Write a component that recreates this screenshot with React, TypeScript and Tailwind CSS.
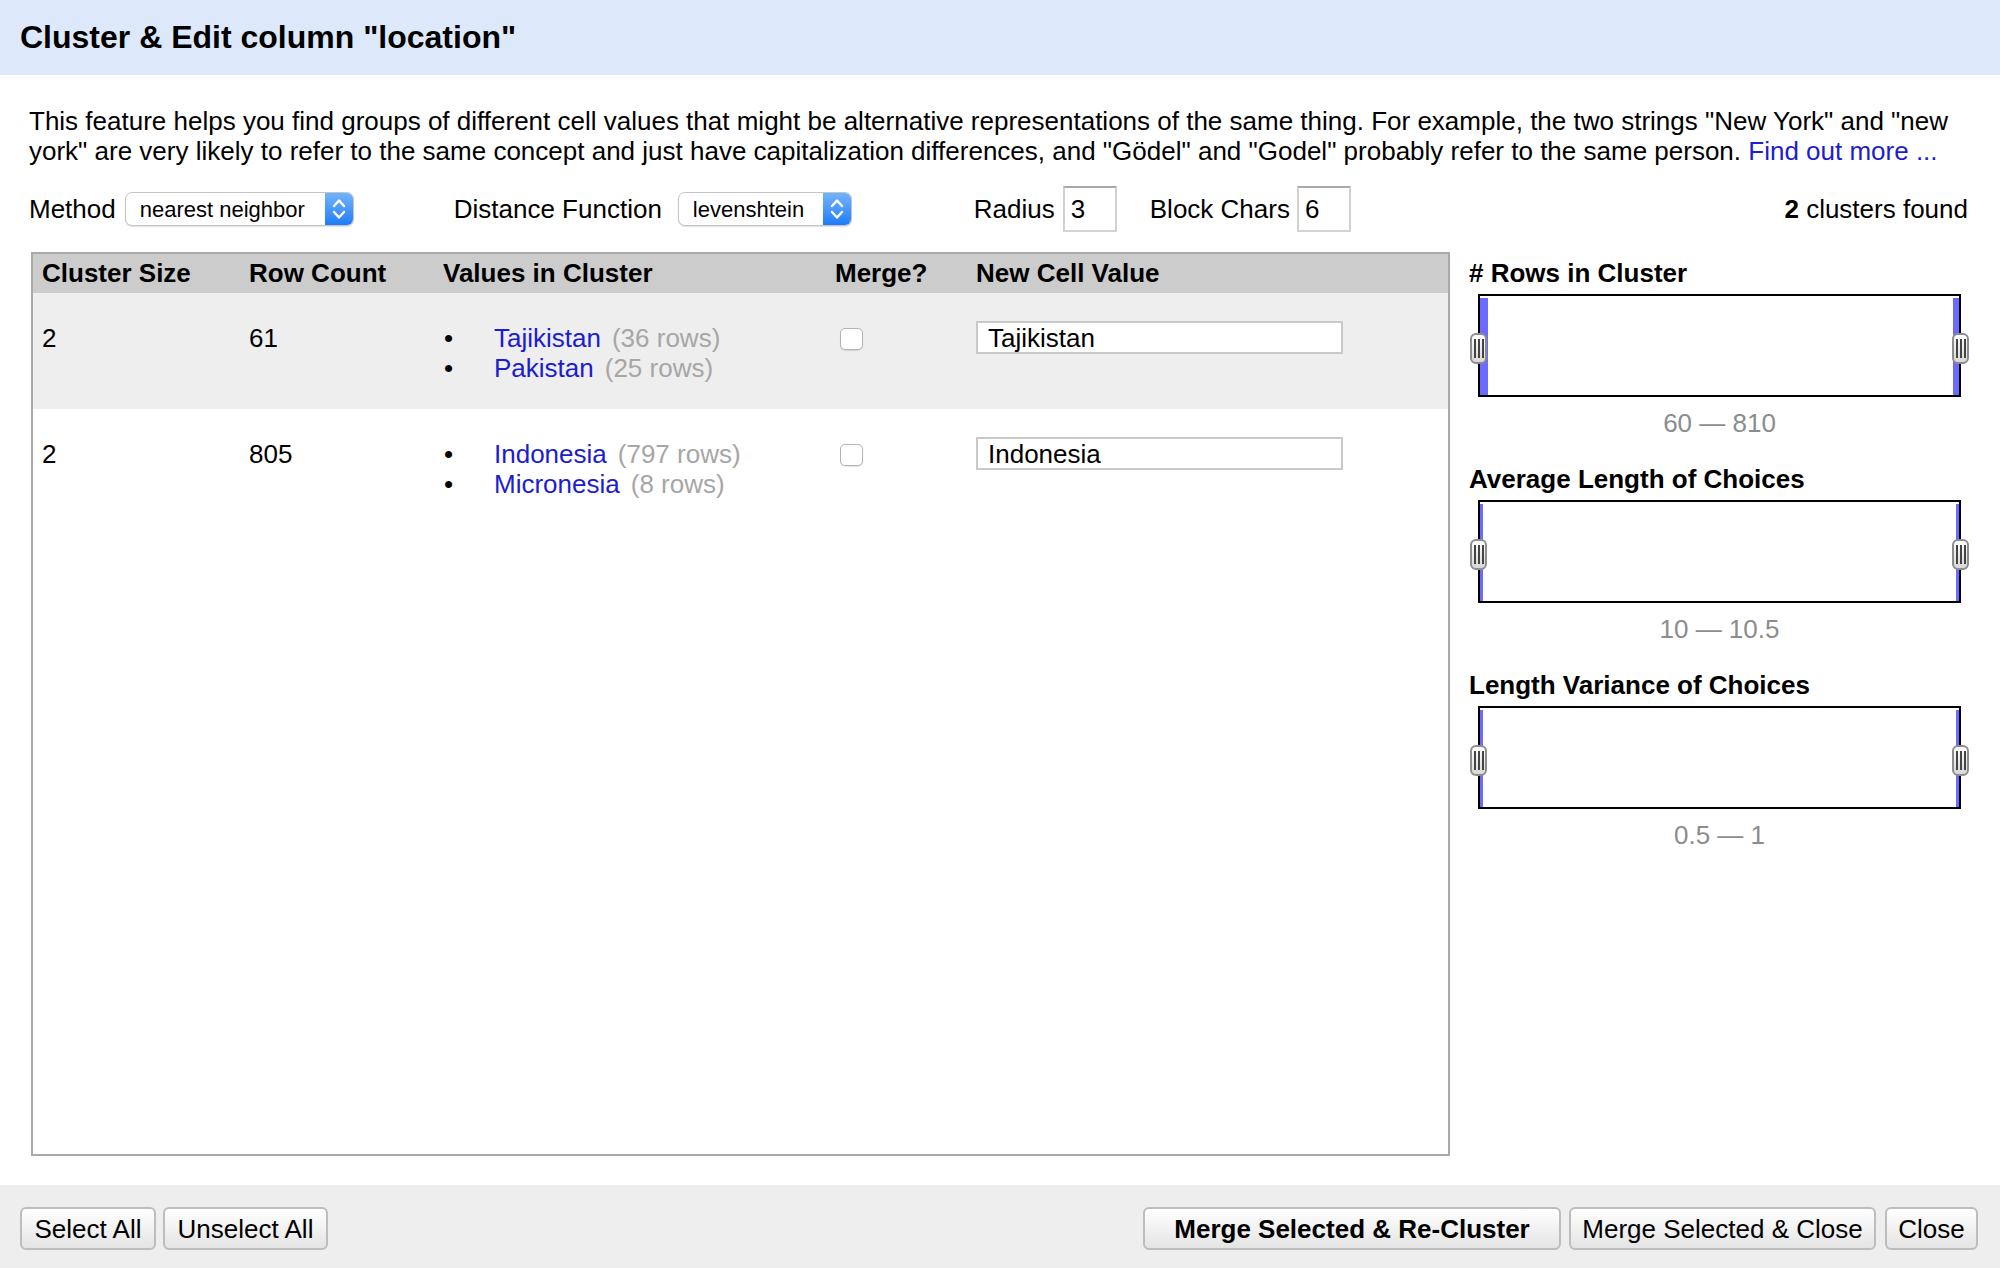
import React from 'react';

const clusters = [
  {
    size: 2,
    rows: 61,
    values: [
      { name: 'Tajikistan', count: 36 },
      { name: 'Pakistan', count: 25 },
    ],
    newValue: 'Tajikistan',
    shaded: true,
  },
  {
    size: 2,
    rows: 805,
    values: [
      { name: 'Indonesia', count: 797 },
      { name: 'Micronesia', count: 8 },
    ],
    newValue: 'Indonesia',
    shaded: false,
  },
];

function Stepper() {
  return (
    <div className="w-[28px] h-full rounded-r-[6px] bg-gradient-to-b from-[#72b3fd] to-[#1a7cf8] flex items-center justify-center">
      <svg width="16" height="26" viewBox="0 0 16 26" fill="none" stroke="white" strokeWidth="2.4" strokeLinecap="round" strokeLinejoin="round">
        <path d="M3 10 L8 4.5 L13 10" />
        <path d="M3 16 L8 21.5 L13 16" />
      </svg>
    </div>
  );
}

function Select({ value, className }: { value: string; className: string }) {
  return (
    <div className={`h-[34px] flex items-stretch rounded-[7px] border border-[#c4c4c4] bg-white shadow-[0_1px_1px_rgba(0,0,0,0.12)] ${className}`}>
      <div className="flex-1 pl-[14px] flex items-center text-[22px]">{value}</div>
      <Stepper />
    </div>
  );
}

function SmallInput({ value }: { value: string }) {
  return (
    <div className="w-[54px] h-[46px] border-2 border-[#d2d2d2] border-t-[#a9a9a9] bg-white flex items-center pl-[6px]">
      {value}
    </div>
  );
}

function Handle({ side }: { side: 'left' | 'right' }) {
  return (
    <div
      className={`absolute top-[37px] w-[17px] h-[31px] rounded-[6px] border-2 border-[#8d8d8d] bg-gradient-to-b from-white to-[#d8d8d8] flex items-center justify-center gap-[2px] ${
        side === 'left' ? 'left-[-10px]' : 'right-[-10px]'
      }`}
    >
      <div className="w-[2px] h-[19px] bg-[#444]" />
      <div className="w-[2px] h-[19px] bg-[#444]" />
      <div className="w-[2px] h-[19px] bg-[#444]" />
    </div>
  );
}

function Histogram({ title, range, leftBar, rightBar }: { title: string; range: string; leftBar: string; rightBar: string }) {
  return (
    <div className="mb-[26px]">
      <div className="font-bold leading-[30px]">{title}</div>
      <div className="relative mt-[6px] ml-[9px] w-[483px] h-[103px] border-2 border-black bg-white">
        <div className={`absolute left-0 top-[2px] bottom-0 bg-[#6b6bff] ${leftBar}`} />
        <div className={`absolute right-0 top-[2px] bottom-0 bg-[#6b6bff] ${rightBar}`} />
        <Handle side="left" />
        <Handle side="right" />
      </div>
      <div className="ml-[9px] w-[483px] mt-[11px] text-center leading-[30px] text-[#8c8c8c]">{range}</div>
    </div>
  );
}

function Button({ label, bold, className = '' }: { label: string; bold?: boolean; className?: string }) {
  return (
    <button
      className={`h-[43px] rounded-[6px] border-2 border-[#bdbdbd] bg-gradient-to-b from-white to-[#e4e4e4] text-[26px] leading-none text-black ${
        bold ? 'font-bold' : ''
      } ${className}`}
    >
      {label}
    </button>
  );
}

export default function App() {
  return (
    <div className="w-[2000px] h-[1268px] flex flex-col bg-white text-black text-[26px] font-['Liberation_Sans',Arial,sans-serif]">
      <header className="h-[75px] shrink-0 bg-[#dde9fb] flex items-center pl-[20px]">
        <h1 className="text-[32px] font-bold -mt-[2px]">Cluster &amp; Edit column "location"</h1>
      </header>

      <main className="flex-1 flex flex-col pt-[31px] pl-[29px] pr-[32px] min-h-0">
        <p className="leading-[30px]">
          This feature helps you find groups of different cell values that might be alternative representations of the same thing. For
          example, the two strings "New York" and "new
          <br />
          york" are very likely to refer to the same concept and just have capitalization differences, and "Gödel" and "Godel" probably
          refer to the same person. <span className="text-[#1c1cd0]">Find out more ...</span>
        </p>

        <div className="mt-[20px] h-[46px] flex items-center">
          <span>Method</span>
          <Select value="nearest neighbor" className="ml-[9px] w-[229px]" />
          <span className="ml-[100px]">Distance Function</span>
          <Select value="levenshtein" className="ml-[16px] w-[174px]" />
          <span className="ml-[122px]">Radius</span>
          <div className="ml-[8px]">
            <SmallInput value="3" />
          </div>
          <span className="ml-[33px]">Block Chars</span>
          <div className="ml-[7px]">
            <SmallInput value="6" />
          </div>
          <span className="ml-auto">
            <b>2</b> clusters found
          </span>
        </div>

        <div className="mt-[20px] mb-[29px] flex-1 flex min-h-0">
          <div className="ml-[2px] w-[1419px] border-2 border-[#a9a9a9] bg-white flex flex-col">
            <div className="h-[39px] bg-[#cccccc] grid grid-cols-[207px_194px_392px_141px_1fr] items-center font-bold">
              <div className="pl-[9px]">Cluster Size</div>
              <div className="pl-[9px]">Row Count</div>
              <div className="pl-[9px]">Values in Cluster</div>
              <div className="pl-[9px]">Merge?</div>
              <div className="pl-[9px]">New Cell Value</div>
            </div>
            {clusters.map((c) => (
              <div
                key={c.newValue}
                className={`h-[116px] pt-[30px] grid grid-cols-[207px_194px_392px_141px_1fr] items-start leading-[30px] ${
                  c.shaded ? 'bg-[#eeeeee]' : 'bg-white'
                }`}
              >
                <div className="pl-[9px]">{c.size}</div>
                <div className="pl-[9px]">{c.rows}</div>
                <div className="pl-[9px]">
                  {c.values.map((v) => (
                    <div key={v.name} className="flex">
                      <span className="w-[51px] pl-[1px]">•</span>
                      <span className="text-[#1c1cd0]">{v.name}</span>
                      <span className="ml-[11px] text-[#a6a6a6]">({v.count} rows)</span>
                    </div>
                  ))}
                </div>
                <div className="pl-[14px] pt-[5px]">
                  <div className="w-[23px] h-[22px] rounded-[5px] border border-[#b3b3b3] bg-white shadow-[0_1px_1px_rgba(0,0,0,0.1)]" />
                </div>
                <div className="pl-[9px]">
                  <div className="-mt-[2px] w-[367px] h-[33px] border-2 border-[#c9c9c9] bg-white flex items-center pl-[10px] leading-none">
                    {c.newValue}
                  </div>
                </div>
              </div>
            ))}
          </div>

          <div className="ml-[19px] pt-[6px]">
            <Histogram title="# Rows in Cluster" range="60 — 810" leftBar="w-[8px]" rightBar="w-[6px]" />
            <Histogram title="Average Length of Choices" range="10 — 10.5" leftBar="w-[3px]" rightBar="w-[3px]" />
            <Histogram title="Length Variance of Choices" range="0.5 — 1" leftBar="w-[3px]" rightBar="w-[3px]" />
          </div>
        </div>
      </main>

      <footer className="h-[83px] shrink-0 bg-[#eeeeee] flex items-start pt-[22px] px-[20px]">
        <Button label="Select All" className="w-[136px]" />
        <Button label="Unselect All" className="ml-[7px] w-[165px]" />
        <Button label="Merge Selected & Re-Cluster" bold className="ml-auto w-[418px]" />
        <Button label="Merge Selected & Close" className="ml-[8px] w-[307px]" />
        <Button label="Close" className="ml-[9px] w-[93px] mr-[2px]" />
      </footer>
    </div>
  );
}
